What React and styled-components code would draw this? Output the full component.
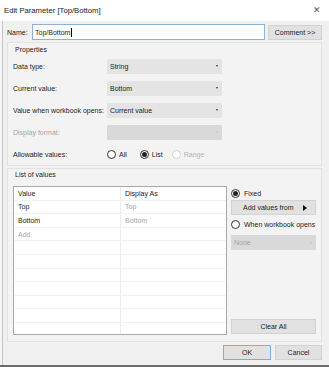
import React from "react";
import styled, { createGlobalStyle, css } from "styled-components";

const GlobalStyle = createGlobalStyle`
  html, body {
    margin: 0;
    padding: 0;
    background: #f0f0f0;
  }
  * {
    box-sizing: border-box;
  }
`;

const Window = styled.div`
  width: 329px;
  height: 367px;
  display: flex;
  flex-direction: column;
  font-family: "Liberation Sans", Arial, sans-serif;
  font-size: 7px;
  color: #1b1b1b;
  background: linear-gradient(
    to right,
    #f6f6f6 2px,
    #c4c4c4 2px,
    #c4c4c4 3px,
    #f0f0f0 3px
  );
  border-bottom: 2px solid #6c6c6c;
`;

const TitleBar = styled.div`
  height: 21px;
  flex: none;
  display: flex;
  align-items: center;
  justify-content: space-between;
  padding: 0 8px 1px 4px;
  background: #ffffff;
  font-size: 7.7px;
  color: #222;
`;

const Close = styled.span`
  font-size: 9px;
  color: #555;
`;

const Content = styled.div`
  flex: 1;
  display: flex;
  flex-direction: column;
  padding: 3px 7px 0 7px;
`;

const NameRow = styled.div`
  height: 16px;
  display: flex;
  align-items: center;
`;

const NameLabel = styled.span`
  width: 25px;
`;

const TextInput = styled.div`
  width: 233px;
  height: 16px;
  display: flex;
  align-items: center;
  padding-left: 2px;
  background: #fff;
  border: 1px solid #8eb1d6;
`;

const Caret = styled.span`
  width: 1px;
  height: 9px;
  margin-left: 1px;
  background: #000;
`;

const Button = styled.div`
  height: ${(p) => p.$h || 15}px;
  width: ${(p) => p.$w}px;
  display: flex;
  align-items: center;
  justify-content: ${(p) => (p.$between ? "space-between" : "center")};
  padding: 0 ${(p) => (p.$between ? "8px 0 11px" : "0")};
  background: #e1e1e1;
  border: 1px solid ${(p) => (p.$primary ? "#7eaedb" : "#d2d2d2")};
  color: #1b1b1b;
`;

const CommentButton = styled(Button)`
  margin-left: 3px;
`;

const Group = styled.div`
  display: flex;
  flex-direction: column;
  margin-top: 2px;
  height: ${(p) => p.$h}px;
  border: 1px solid #e2e2e2;
  background: #f3f3f3;
  padding: ${(p) => p.$pt}px 5px 0 5px;
`;

const GroupLabel = styled.div`
  height: 10px;
  line-height: 10px;
  padding-left: 2px;
`;

const PropGrid = styled.div`
  display: grid;
  grid-template-columns: 94px 115px;
  grid-auto-rows: 22px;
  align-items: center;
`;

const Label = styled.span`
  color: ${(p) => (p.$disabled ? "#a6a6a6" : "#1b1b1b")};
`;

const Select = styled.div`
  height: 15px;
  display: flex;
  align-items: center;
  justify-content: space-between;
  padding: 0 4px 0 3px;
  background: ${(p) => (p.$disabled ? "#d9d9d9" : "#e4e4e4")};
  color: ${(p) => (p.$disabled ? "#a6a6a6" : "#1b1b1b")};
`;

const Arrow = styled.span`
  width: 0;
  height: 0;
  border-left: 1.5px solid transparent;
  border-right: 1.5px solid transparent;
  border-top: 2px solid ${(p) => (p.$disabled ? "#bdbdbd" : "#333")};
`;

const RadioGroup = styled.div`
  display: flex;
  align-items: center;
  gap: 0;
  padding-left: 0;
`;

const RadioItem = styled.label`
  display: flex;
  align-items: center;
  gap: 3px;
  margin-left: ${(p) => p.$ml || 0}px;
  color: ${(p) => (p.$disabled ? "#b3b3b3" : "#1b1b1b")};
`;

const Circle = styled.span`
  width: 9px;
  height: 9px;
  border-radius: 50%;
  border: 1px solid ${(p) => (p.$disabled ? "#d2d2d2" : "#333")};
  background: #fff;
  display: flex;
  align-items: center;
  justify-content: center;
  ${(p) =>
    p.$checked &&
    css`
      &::after {
        content: "";
        width: 5px;
        height: 5px;
        border-radius: 50%;
        background: #222;
      }
    `}
`;

const ListBody = styled.div`
  display: flex;
  gap: 4px;
  margin-top: 6px;
`;

const Table = styled.div`
  width: 214px;
  height: 149px;
  flex: none;
  overflow: hidden;
  background: #fff;
  border: 1px solid #a9a9a9;
`;

const Row = styled.div`
  height: 13.6px;
  display: grid;
  grid-template-columns: 107px 1fr;
  border-bottom: 1px solid #f2f2f2;
`;

const Cell = styled.div`
  display: flex;
  align-items: center;
  padding-left: 4px;
  border-right: ${(p) => (p.$first ? "1px solid #ececec" : "none")};
  color: ${(p) => (p.$muted ? "#a6a6a6" : "#1b1b1b")};
`;

const Side = styled.div`
  width: 85px;
  display: flex;
  flex-direction: column;
  padding-top: 0;
`;

const SideRadio = styled(RadioItem)`
  height: ${(p) => p.$h}px;
  gap: 4px;
`;

const SideSelect = styled(Select)`
  margin-top: 1px;
`;

const ClearAll = styled(Button)`
  margin-top: auto;
  margin-bottom: 1px;
`;

const Footer = styled.div`
  display: flex;
  justify-content: flex-end;
  gap: 4px;
  margin-top: 3px;
`;

const Triangle = styled.span`
  width: 0;
  height: 0;
  border-top: 3px solid transparent;
  border-bottom: 3px solid transparent;
  border-left: 4px solid #111;
`;

const rows = [
  { value: "Value", display: "Display As", header: true },
  { value: "Top", display: "Top" },
  { value: "Bottom", display: "Bottom" },
  { value: "Add", display: "", add: true },
  ...Array.from({ length: 7 }, () => ({ value: "", display: "" })),
];

export default function App() {
  return (
    <>
      <GlobalStyle />
      <Window>
        <TitleBar>
          <span>Edit Parameter [Top/Bottom]</span>
          <Close>✕</Close>
        </TitleBar>
        <Content>
          <NameRow>
            <NameLabel>Name:</NameLabel>
            <TextInput>
              Top/Bottom
              <Caret />
            </TextInput>
            <CommentButton $w={54}>Comment &gt;&gt;</CommentButton>
          </NameRow>

          <Group $h={124} $pt={2}>
            <GroupLabel>Properties</GroupLabel>
            <PropGrid>
              <Label>Data type:</Label>
              <Select>
                String
                <Arrow />
              </Select>
              <Label>Current value:</Label>
              <Select>
                Bottom
                <Arrow />
              </Select>
              <Label>Value when workbook opens:</Label>
              <Select>
                Current value
                <Arrow />
              </Select>
              <Label $disabled>Display format:</Label>
              <Select $disabled>
                <span />
                <Arrow $disabled />
              </Select>
              <Label>Allowable values:</Label>
              <RadioGroup>
                <RadioItem>
                  <Circle />
                  All
                </RadioItem>
                <RadioItem $ml={13}>
                  <Circle $checked />
                  List
                </RadioItem>
                <RadioItem $ml={9} $disabled>
                  <Circle $disabled />
                  Range
                </RadioItem>
              </RadioGroup>
            </PropGrid>
          </Group>

          <Group $h={174} $pt={1}>
            <GroupLabel>List of values</GroupLabel>
            <ListBody>
              <Table>
                {rows.map((r, i) => (
                  <Row key={i}>
                    <Cell $first $muted={r.add}>
                      {r.value}
                    </Cell>
                    <Cell $muted={!r.header}>{r.display}</Cell>
                  </Row>
                ))}
              </Table>
              <Side>
                <SideRadio $h={14}>
                  <Circle $checked />
                  Fixed
                </SideRadio>
                <Button $w={85} $between>
                  <span>Add values from</span>
                  <Triangle />
                </Button>
                <SideRadio $h={19}>
                  <Circle />
                  When workbook opens
                </SideRadio>
                <SideSelect $disabled>
                  None
                  <Arrow $disabled />
                </SideSelect>
                <ClearAll $w={85}>Clear All</ClearAll>
              </Side>
            </ListBody>
          </Group>

          <Footer>
            <Button $w={48} $primary>
              OK
            </Button>
            <Button $w={47}>Cancel</Button>
          </Footer>
        </Content>
      </Window>
    </>
  );
}
